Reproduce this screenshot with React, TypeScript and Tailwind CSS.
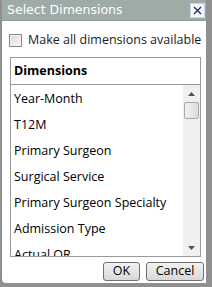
import React from 'react';

const items = [
  'Year-Month',
  'T12M',
  'Primary Surgeon',
  'Surgical Service',
  'Primary Surgeon Specialty',
  'Admission Type',
  'Actual OR',
];

const App: React.FC = () => {
  return (
    <div className="w-[212px] h-[287px] bg-[#8f8f8f] pl-[2px] pr-[6px] pb-[4px] font-['Open_Sans',sans-serif]">
      <div className="h-full flex flex-col bg-white rounded-bl-[4px]">
        {/* Title bar */}
        <div className="h-[21px] shrink-0 bg-[#9eaba7] flex items-center justify-between pl-[5px] pr-[1px] border-b border-[#8d9995]">
          <span className="text-white text-[12.5px] font-['DejaVu_Sans',sans-serif]">Select Dimensions</span>
          <button className="w-[15px] h-[15px] bg-[#f4f6fb] border border-[#c9d3e6] flex items-center justify-center">
            <svg width="9" height="9" viewBox="0 0 9 9">
              <path d="M1 1 L8 8 M8 1 L1 8" stroke="#1b2f6e" strokeWidth="1.4" />
            </svg>
          </button>
        </div>

        {/* Checkbox */}
        <label className="flex items-center gap-[6px] pl-[7px] mt-[11px] h-[16px] shrink-0">
          <span className="w-[13px] h-[13px] shrink-0 border border-[#8a8a8a] bg-gradient-to-br from-[#dcdcdc] to-[#f7f7f7] shadow-[inset_0_0_0_1px_#f1f1f1]" />
          <span className="text-[12.5px] text-[#1a1a1a] leading-none whitespace-nowrap">Make all dimensions available</span>
        </label>

        {/* List box */}
        <div className="ml-[8px] mr-[5px] mt-[9px] h-[200px] shrink-0 border border-[#9a9a9a] flex flex-col overflow-hidden">
          <div className="h-[27px] shrink-0 border-b border-[#9a9a9a] flex items-center pl-[3px]">
            <span className="text-[12.5px] font-bold text-black">Dimensions</span>
          </div>
          <div className="flex flex-1 min-h-0">
            <div className="flex-1 overflow-hidden pt-[1px]">
              {items.map((it) => (
                <div key={it} className="h-[26px] flex items-center pl-[3px] text-[12.5px] text-black whitespace-nowrap">
                  {it}
                </div>
              ))}
            </div>
            <div className="w-[17px] bg-[#f0f0f0] flex flex-col items-center">
              <div className="h-[17px] flex items-center justify-center">
                <svg width="7" height="4" viewBox="0 0 7 4"><path d="M0 4 L3.5 0 L7 4 Z" fill="#505050" /></svg>
              </div>
              <div className="w-[15px] h-[17px] border border-[#a8a8a8] rounded-[2px] bg-gradient-to-r from-[#f2f2f2] to-[#dcdcdc]" />
              <div className="flex-1" />
              <div className="h-[17px] flex items-center justify-center">
                <svg width="7" height="4" viewBox="0 0 7 4"><path d="M0 0 L3.5 4 L7 0 Z" fill="#505050" /></svg>
              </div>
            </div>
          </div>
        </div>

        {/* Buttons */}
        <div className="flex justify-end gap-[6px] pr-[2px] mt-[5px]">
          <button className="w-[37px] h-[19px] border border-[#707070] rounded-[3px] bg-gradient-to-b from-[#f2f2f2] to-[#d8d8d8] text-[12.5px] leading-none text-black">OK</button>
          <button className="w-[58px] h-[19px] border border-[#707070] rounded-[3px] bg-gradient-to-b from-[#f2f2f2] to-[#d8d8d8] text-[12.5px] leading-none text-black">Cancel</button>
        </div>
      </div>
    </div>
  );
};

export default App;
